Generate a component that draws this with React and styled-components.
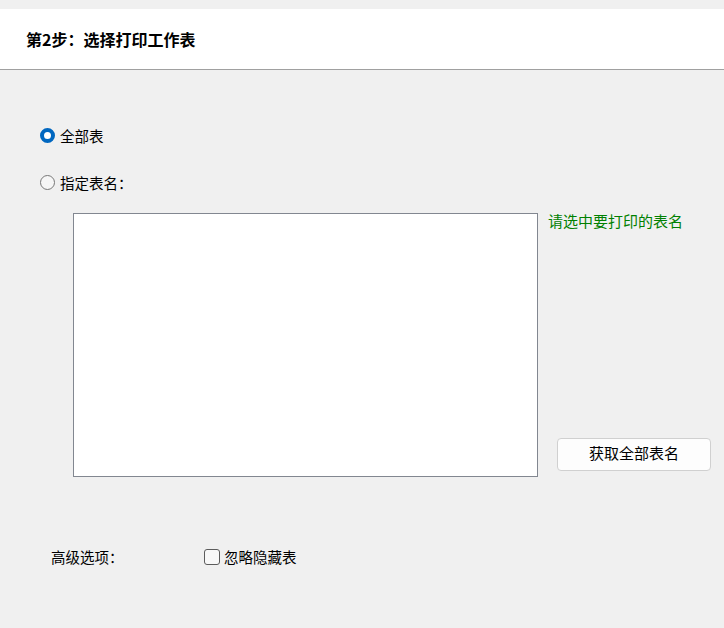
import React from "react";
import styled, { createGlobalStyle } from "styled-components";

const Global = createGlobalStyle`
  html, body { margin: 0; padding: 0; background: #f0f0f0; }
  body { font-family: "Noto Sans CJK SC", "Noto Sans", sans-serif; color: #000; }
`;

const Page = styled.div`
  width: 724px;
  height: 628px;
  background: #f0f0f0;
  padding-top: 9px;
  box-sizing: border-box;
  overflow: hidden;
`;

const Header = styled.div`
  height: 60px;
  background: #fff;
  border-bottom: 1px solid #a0a0a0;
  display: flex;
  align-items: center;
  padding-left: 26px;
  font-size: 16px;
  font-weight: 700;
`;

const Content = styled.div`
  padding: 55px 0 0 40px;
  display: flex;
  flex-direction: column;
`;

const OptionRow = styled.label`
  display: flex;
  align-items: center;
  gap: 5px;
  height: 21px;
  font-size: 14.5px;
  margin-bottom: ${(p) => p.$mb || 0}px;
`;

const Radio = styled.span`
  width: 15px;
  height: 15px;
  border-radius: 50%;
  box-sizing: border-box;
  flex: none;
  ${(p) =>
    p.$checked
      ? `background: #fff; border: 4.5px solid #0067c0;`
      : `background: #f6f6f6; border: 1px solid #777;`}
`;

const ListArea = styled.div`
  display: flex;
  margin-left: 33px;
  margin-top: 20px;
`;

const ListBox = styled.div`
  width: 465px;
  height: 264px;
  box-sizing: border-box;
  background: #fff;
  border: 1px solid #828790;
`;

const Side = styled.div`
  margin-left: 10px;
  display: flex;
  flex-direction: column;
  justify-content: space-between;
  padding-bottom: 6px;
`;

const Hint = styled.div`
  color: #008000;
  font-size: 15px;
  line-height: 16px;
`;

const Button = styled.button`
  margin-left: 9px;
  width: 154px;
  height: 33px;
  border: 1px solid #d0d0d0;
  border-radius: 4px;
  background: #fdfdfd;
  font-family: inherit;
  font-size: 15px;
  color: #000;
  padding: 0 0 4px 0;
`;

const Advanced = styled.div`
  display: flex;
  align-items: center;
  margin-top: 69px;
  margin-left: 11px;
  height: 20px;
  font-size: 14.5px;
`;

const AdvLabel = styled.span`
  width: 153px;
`;

const Check = styled.span`
  width: 16px;
  height: 16px;
  box-sizing: border-box;
  border: 1px solid #5c5c5c;
  border-radius: 3px;
  background: #f8f8f8;
  margin-right: 4px;
  margin-top: 2px;
`;

export default function App() {
  return (
    <Page>
      <Global />
      <Header>第2步：选择打印工作表</Header>
      <Content>
        <OptionRow $mb={26}>
          <Radio $checked />
          全部表
        </OptionRow>
        <OptionRow>
          <Radio />
          指定表名：
        </OptionRow>
        <ListArea>
          <ListBox />
          <Side>
            <Hint>请选中要打印的表名</Hint>
            <Button>获取全部表名</Button>
          </Side>
        </ListArea>
        <Advanced>
          <AdvLabel>高级选项：</AdvLabel>
          <Check />
          忽略隐藏表
        </Advanced>
      </Content>
    </Page>
  );
}
